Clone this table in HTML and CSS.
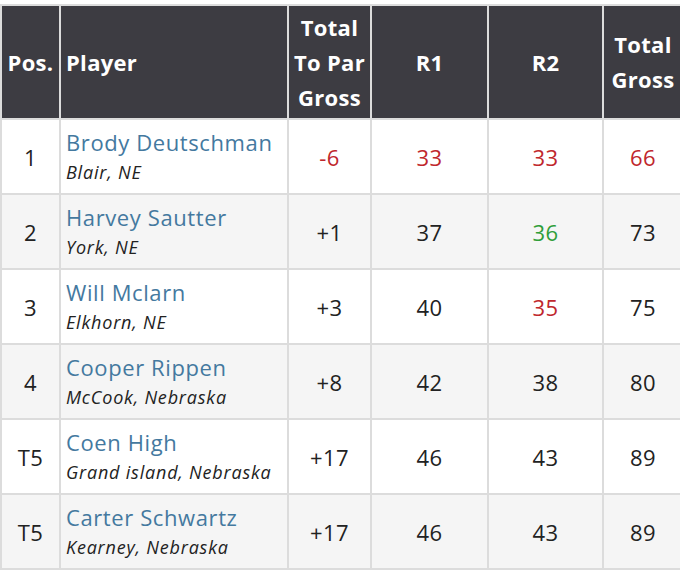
FILE: index.html
```
<!DOCTYPE html>
<html>
<head>
<meta charset="utf-8">
<link rel="stylesheet" href="styles.css">
</head>
<body>
<div class="wrap">
<table class="board">
<colgroup>
<col class="c-pos"><col class="c-player"><col class="c-par"><col class="c-r1"><col class="c-r2"><col class="c-tot">
</colgroup>
<thead>
<tr>
<th>Pos.</th>
<th class="left">Player</th>
<th>Total<br>To Par<br>Gross</th>
<th>R1</th>
<th>R2</th>
<th>Total<br>Gross</th>
</tr>
</thead>
<tbody>
<tr>
<td>1</td>
<td class="player"><div class="name">Brody Deutschman</div><div class="loc">Blair, NE</div></td>
<td class="red">-6</td><td class="red">33</td><td class="red">33</td><td class="red">66</td>
</tr>
<tr>
<td>2</td>
<td class="player"><div class="name">Harvey Sautter</div><div class="loc">York, NE</div></td>
<td>+1</td><td>37</td><td class="green">36</td><td>73</td>
</tr>
<tr>
<td>3</td>
<td class="player"><div class="name">Will Mclarn</div><div class="loc">Elkhorn, NE</div></td>
<td>+3</td><td>40</td><td class="red">35</td><td>75</td>
</tr>
<tr>
<td>4</td>
<td class="player"><div class="name">Cooper Rippen</div><div class="loc">McCook, Nebraska</div></td>
<td>+8</td><td>42</td><td>38</td><td>80</td>
</tr>
<tr>
<td>T5</td>
<td class="player"><div class="name">Coen High</div><div class="loc">Grand island, Nebraska</div></td>
<td>+17</td><td>46</td><td>43</td><td>89</td>
</tr>
<tr>
<td>T5</td>
<td class="player"><div class="name">Carter Schwartz</div><div class="loc">Kearney, Nebraska</div></td>
<td>+17</td><td>46</td><td>43</td><td>89</td>
</tr>
</tbody>
</table>
</div>
</body>
</html>
```
FILE: styles.css
```
html, body {
  margin: 0;
  padding: 0;
  background: #ffffff;
}
.wrap {
  padding-top: 4px;
  width: 682px;
}
.board {
  border-collapse: collapse;
  table-layout: fixed;
  width: 682px;
  font-family: "Open Sans", "Liberation Sans", sans-serif;
  color: #222222;
}
.c-pos { width: 59px; }
.c-player { width: 228px; }
.c-par { width: 83px; }
.c-r1 { width: 117px; }
.c-r2 { width: 115px; }
.c-tot { width: 80px; }
.board th, .board td {
  border: 2px solid #dcdcdc;
  text-align: center;
  vertical-align: middle;
  padding: 0 4px;
}
.board th {
  background: #3d3c42;
  color: #ffffff;
  font-weight: 700;
  font-size: 22px;
  line-height: 35px;
  height: 112px;
  padding: 0;
  letter-spacing: 0.3px;
}
.board th.left {
  text-align: left;
  padding-left: 5px;
}
.board td {
  height: 73px;
  font-size: 22px;
  letter-spacing: 0.5px;
}
.board tbody tr:nth-child(even) td {
  background: #f5f5f5;
}
.board td.player {
  text-align: left;
  padding: 0 5px;
}
.name {
  color: #44799f;
  font-size: 22px;
  line-height: 30px;
  letter-spacing: 0.6px;
  white-space: nowrap;
}
.loc {
  font-style: italic;
  font-size: 18px;
  line-height: 30px;
  letter-spacing: 0.8px;
  color: #222222;
  white-space: nowrap;
}
.red { color: #c0272d; }
.green { color: #2f9e3a; }
```
